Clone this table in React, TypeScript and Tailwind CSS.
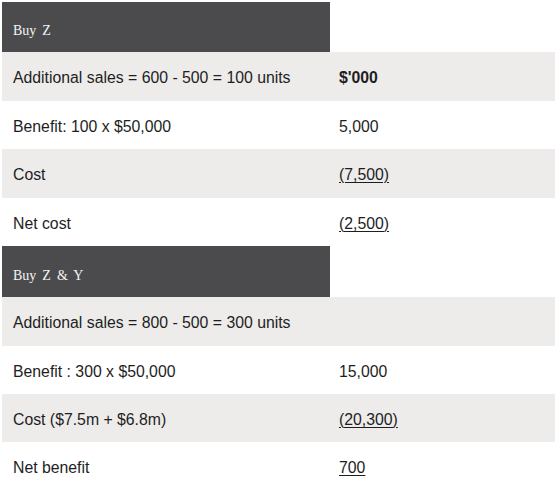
import React from "react";

type Row = { kind: "head" | "row"; left: string; right?: string; bg?: boolean; u?: boolean; bold?: boolean; h: number };

const rows: Row[] = [
  { kind: "head", left: "Buy Z", h: 50 },
  { kind: "row", left: "Additional sales = 600 - 500 = 100 units", right: "$'000", bold: true, bg: true, h: 49 },
  { kind: "row", left: "Benefit: 100 x $50,000", right: "5,000", h: 48 },
  { kind: "row", left: "Cost", right: "(7,500)", u: true, bg: true, h: 49 },
  { kind: "row", left: "Net cost", right: "(2,500)", u: true, h: 48 },
  { kind: "head", left: "Buy Z & Y", h: 51 },
  { kind: "row", left: "Additional sales = 800 - 500 = 300 units", bg: true, h: 49 },
  { kind: "row", left: "Benefit : 300 x $50,000", right: "15,000", h: 48 },
  { kind: "row", left: "Cost ($7.5m + $6.8m)", right: "(20,300)", u: true, bg: true, h: 48 },
  { kind: "row", left: "Net benefit", right: "700", u: true, h: 48 },
];

export default function App() {
  return (
    <div className="w-[558px] h-[490px] bg-white pt-[2px] pl-[2px] overflow-hidden" style={{ fontFamily: '"Liberation Sans", Arial, sans-serif' }}>
      <div className="w-[553px] flex flex-col">
        {rows.map((r, i) =>
          r.kind === "head" ? (
            <div key={i} className="flex" style={{ height: r.h }}>
              <div
                className="w-[328px] bg-[#4b4b4d] text-[#f4f4f4] text-[14px] flex items-center pl-[11px] pt-[7px] [word-spacing:2.5px]"
                style={{ fontFamily: '"Liberation Serif", "Times New Roman", serif' }}
              >
                {r.left}
              </div>
              <div className="flex-1 bg-white" />
            </div>
          ) : (
            <div key={i} className={`flex items-center pt-[3px] text-[15.8px] text-[#1e1e1e] ${r.bg ? "bg-[#edeceb]" : "bg-white"}`} style={{ height: r.h }}>
              <div className="w-[337px] pl-[11px]">{r.left}</div>
              <div className={`${r.bold ? "font-bold" : ""} ${r.u ? "underline underline-offset-[2px] decoration-[1px]" : ""}`}>{r.right}</div>
            </div>
          )
        )}
      </div>
    </div>
  );
}
